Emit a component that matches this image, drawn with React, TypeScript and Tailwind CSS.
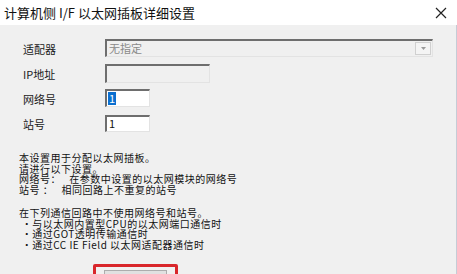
import React from "react";

const font = { fontFamily: '"Noto Sans CJK SC", "Liberation Sans", sans-serif' };

function Sunken({ className, children }: { className: string; children?: React.ReactNode }) {
  return (
    <div
      className={
        "box-border flex items-center border-t-[2px] border-l-[2px] border-r border-b border-t-[#6e6e6e] border-l-[#6e6e6e] border-r-[#e3e3e3] border-b-[#e3e3e3] " +
        className
      }
    >
      {children}
    </div>
  );
}

function Row({ label, children }: { label: string; children: React.ReactNode }) {
  return (
    <div className="flex h-[18px] items-center">
      <span className="w-[82px] pt-[2px] text-[11px] leading-none text-[#1a1a1a]">{label}</span>
      {children}
    </div>
  );
}

export default function App() {
  return (
    <div
      className="flex h-[274px] w-[457px] flex-col overflow-hidden bg-[#f0f0f0] text-black"
      style={font}
    >
      <div className="flex h-[25px] shrink-0 items-center justify-between bg-white pl-[4px] pr-[10px]">
        <span className="text-[13px] leading-none text-[#111]">计算机侧 I/F 以太网插板详细设置</span>
        <svg width="12" height="12" viewBox="0 0 12 12" className="mt-[1px]">
          <path d="M1 1 L11 11 M11 1 L1 11" stroke="#222" strokeWidth="1.2" />
        </svg>
      </div>

      <div className="flex flex-1 flex-col border-r border-r-[#c5ccd6] pl-[23px] pt-[14px]">
        <div className="flex flex-col gap-[7px]">
          <Row label="适配器">
            <Sunken className="h-[18px] w-[328px] justify-between bg-[#f0f0f0] pl-[2px] pr-[1px]">
              <span className="text-[11px] leading-none text-[#8a8a8a]">无指定</span>
              <span className="flex h-[13px] w-[16px] items-center justify-center border border-[#d0d0d0] bg-[#f4f4f4]">
                <svg width="5" height="3" viewBox="0 0 5 3">
                  <path d="M0 0 H5 L2.5 3 Z" fill="#9a9a9a" />
                </svg>
              </span>
            </Sunken>
          </Row>
          <Row label="IP地址">
            <Sunken className="h-[19px] w-[105px] bg-[#f0f0f0]" />
          </Row>
          <Row label="网络号">
            <Sunken className="h-[18px] w-[45px] bg-white pl-[1px]">
              <span className="bg-[#0a6fd0] px-[1px] text-[11px] leading-[13px] text-white">1</span>
            </Sunken>
          </Row>
          <Row label="站号">
            <Sunken className="h-[17px] w-[45px] bg-white pl-[2px]">
              <span className="text-[11px] leading-none text-[#111]">1</span>
            </Sunken>
          </Row>
        </div>

        <div className="mt-[21px] -ml-[4px] whitespace-pre text-[10px] leading-[10.5px] tracking-[0.5px] text-[#111]">
          <p>本设置用于分配以太网插板。</p>
          <p>请进行以下设置。</p>
          <p>网络号：   在参数中设置的以太网模块的网络号</p>
          <p>站号 ：   相同回路上不重复的站号</p>
        </div>

        <div className="mt-[13px] -ml-[4px] whitespace-pre text-[10px] leading-[10.5px] tracking-[0.5px] text-[#111]">
          <p>在下列通信回路中不使用网络号和站号。</p>
          <p> ・与以太网内置型CPU的以太网端口通信时</p>
          <p> ・通过GOT透明传输通信时</p>
          <p> ・通过CC IE Field 以太网适配器通信时</p>
        </div>

        <div className="mt-[14px] ml-[70px] flex h-[20px] w-[85px] justify-center rounded-[2px] border-[3px] border-[#d9262b] pt-[3px]">
          <div className="h-[20px] w-[63px] border border-[#adadad] bg-[#e1e1e1]" />
        </div>
      </div>
    </div>
  );
}
